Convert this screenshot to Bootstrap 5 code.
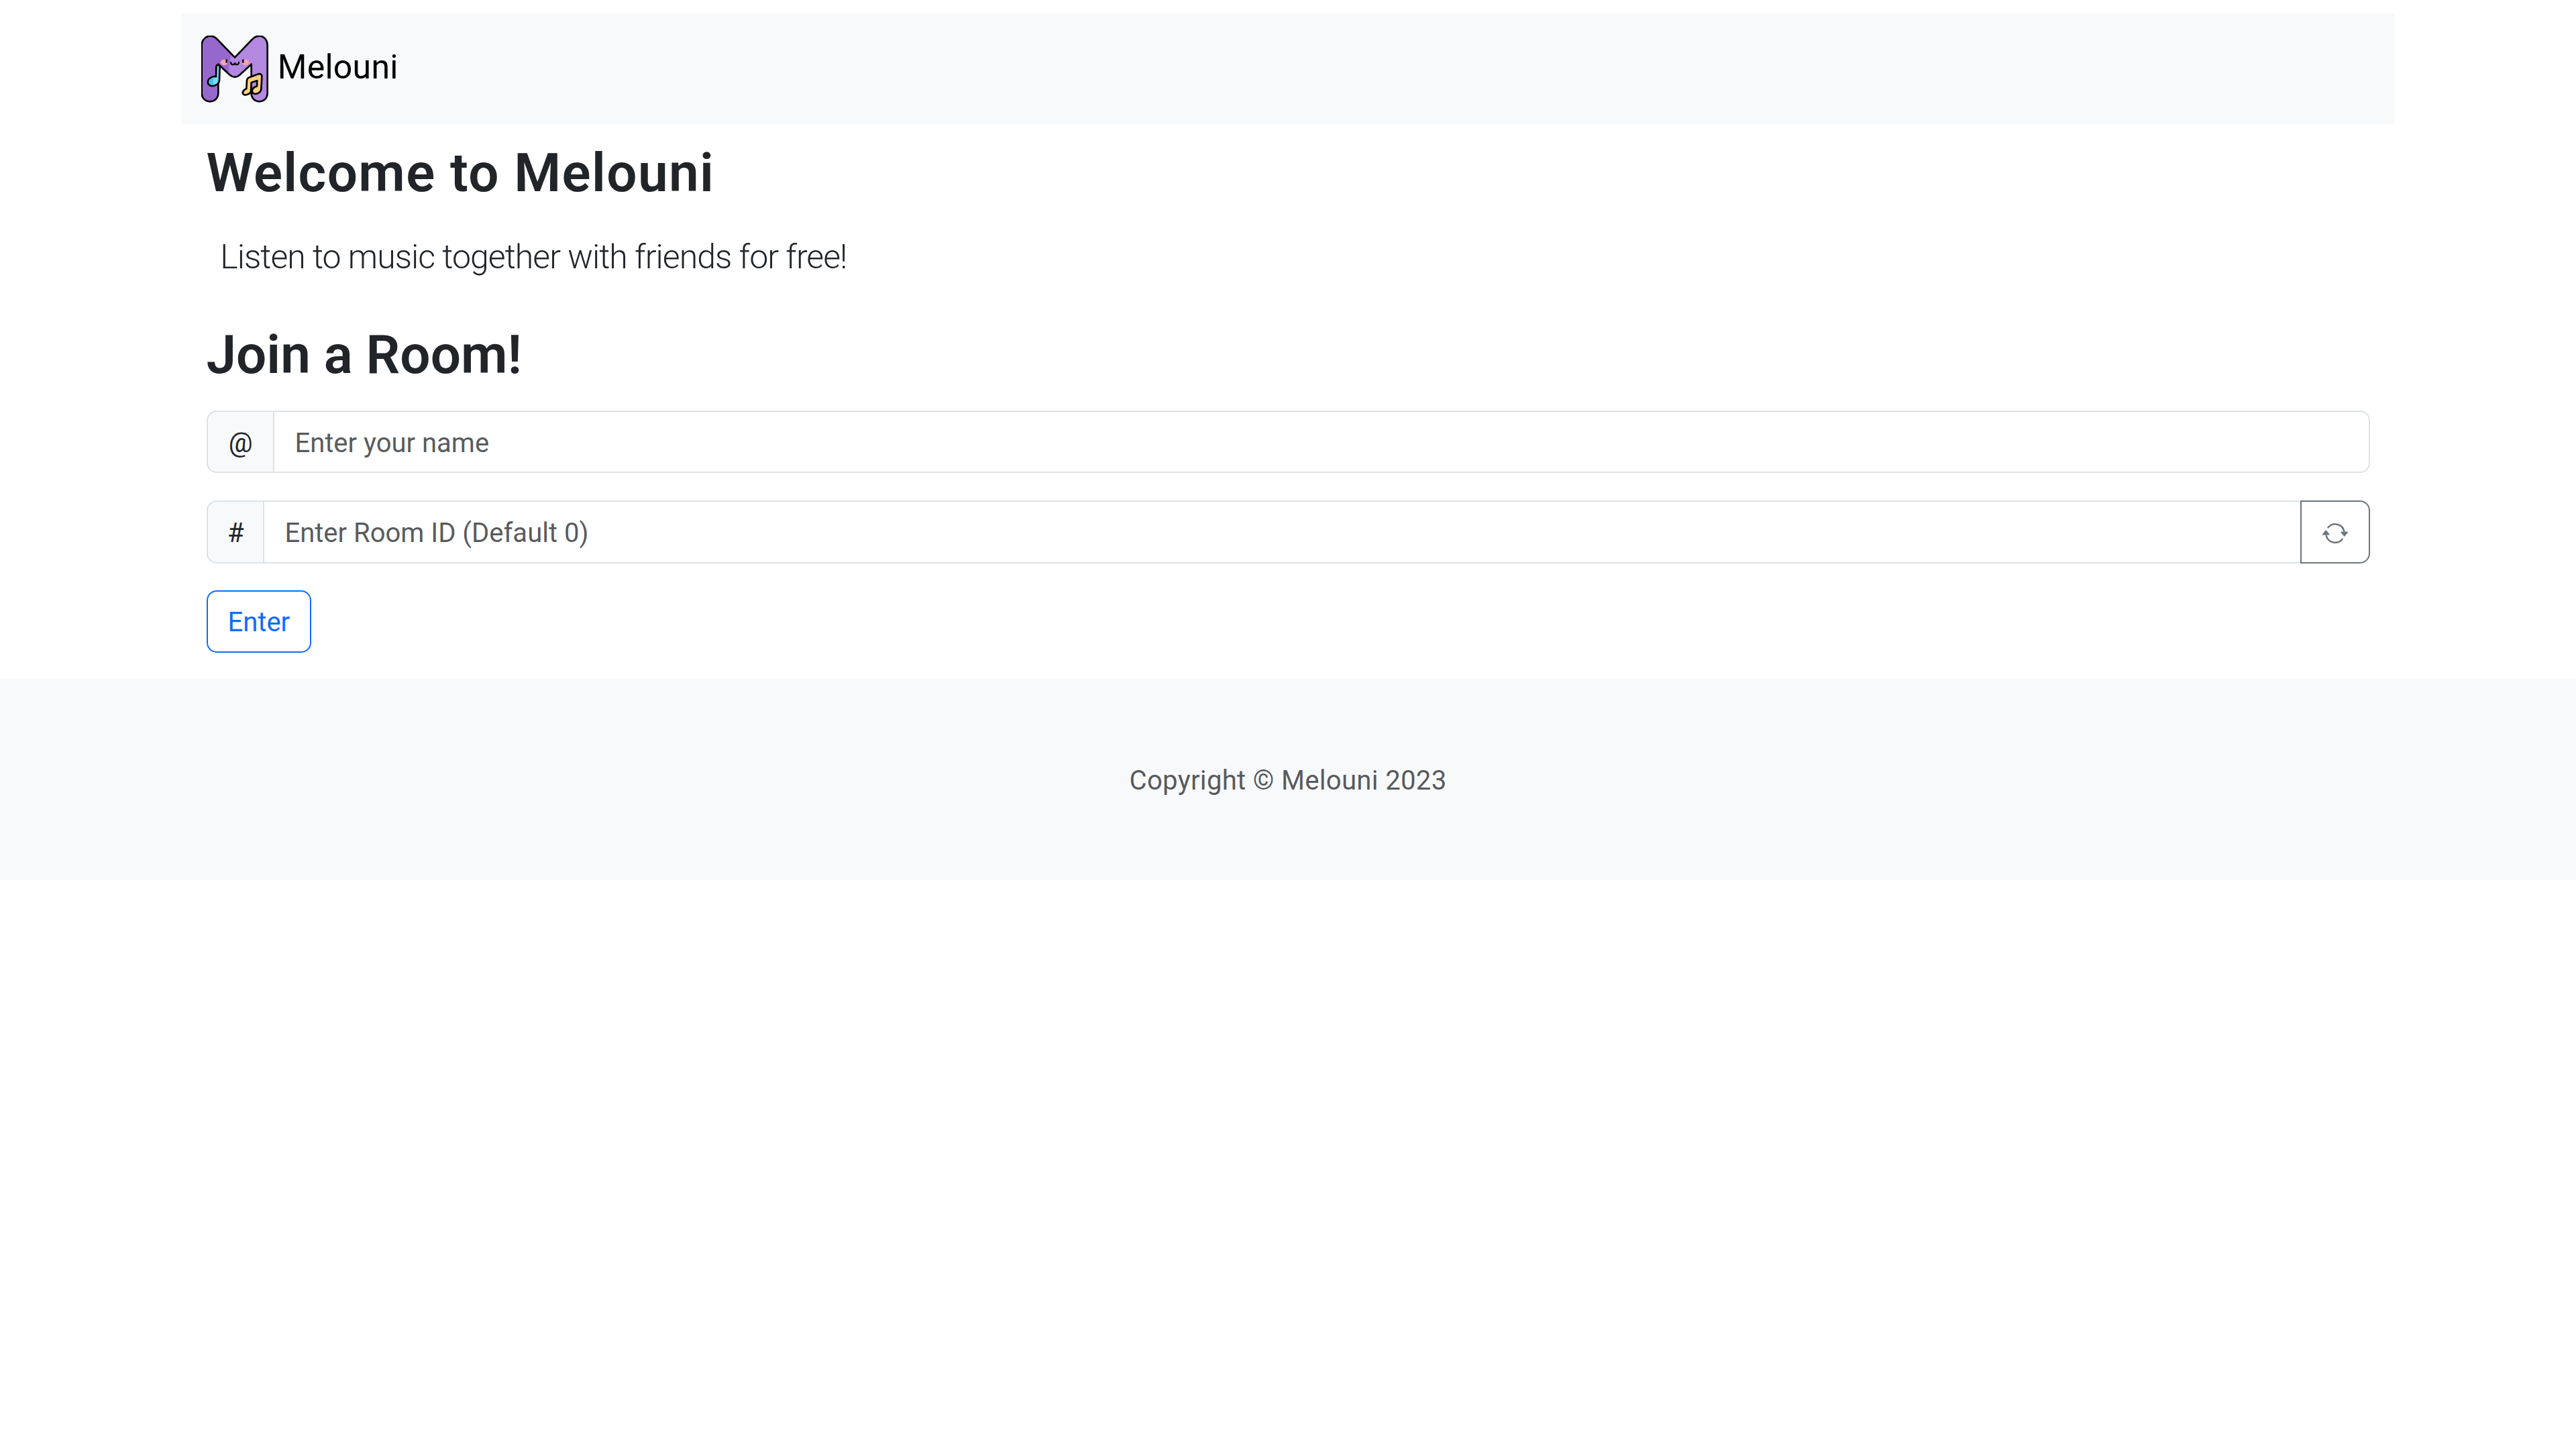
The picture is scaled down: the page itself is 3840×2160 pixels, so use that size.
<!DOCTYPE html>
<html lang="en">

<head>
    <meta charset="UTF-8">
    <meta name="viewport" content="width=device-width, initial-scale=1.0">
    <title>Melouni</title>
    <link href="https://cdn.jsdelivr.net/npm/bootstrap@5.3.0/dist/css/bootstrap.min.css" rel="stylesheet">
    <style>
        html {
            zoom: 2.5;
        }

        body {
            font-family: Roboto, "Noto Sans", sans-serif;
            --bs-body-font-family: Roboto, "Noto Sans", sans-serif;
        }

        .app-nav {
            padding-left: 12px;
            padding-right: 12px;
        }

        .app-brand {
            gap: 5.5px;
        }

        .app-brand-text {
            margin-bottom: 2px;
            letter-spacing: .1px;
        }

        .app-logo {
            width: 40px;
            height: 40px;
        }

        .app-main {
            padding-left: 15px;
            padding-right: 15px;
        }

        .app-title {
            font-weight: 600;
            margin-top: 10px;
            letter-spacing: .56px;
        }

        .app-subtitle {
            padding-left: 8.3px;
            letter-spacing: -.39px;
        }

        .app-join {
            font-weight: 600;
            margin-bottom: 14px;
        }

        .app-form .form-control,
        .app-form .input-group-text,
        .app-form .btn {
            padding-top: 6.6px;
            padding-bottom: 5.1px;
        }

        .app-name-group {
            margin-bottom: 16.4px;
        }

        .app-enter {
            margin-bottom: 15.6px;
        }

        .app-at {
            padding-left: 12.5px;
            padding-right: 12.5px;
        }

        .app-hash {
            padding-left: 11.75px;
            padding-right: 11.75px;
        }

        .app-footer {
            letter-spacing: .14px;
            padding-top: 48.8px;
            padding-bottom: 47.2px;
        }
    </style>
</head>

<body>
    <nav class="navbar bg-light container mt-2 app-nav">
        <a class="navbar-brand d-flex align-items-center app-brand ms-0" href="#">
            <svg class="app-logo" viewBox="60 40 300 300" xmlns="http://www.w3.org/2000/svg">
                <!-- M body -->
                <path fill="#b388e0" d="M62 300V85C62 60 80 42 100 42C112 42 122 47 130 55L210 138L290 55C298 47 308 42 320 42C340 42 356 60 356 85V298C356 320 340 335 320 335C300 335 284 320 284 298V168L232 216C218 228 202 228 188 216L136 168V298C136 320 120 335 99 335C78 335 62 320 62 298Z" />
                <path fill="#9768cc" d="M62 300V85C62 60 80 42 100 42C112 42 122 47 130 55L196 124C186 150 182 180 184 212L136 168V298C136 320 120 335 99 335C78 335 62 320 62 298Z" />
                <ellipse cx="162" cy="160" rx="16" ry="13" fill="#f9a1b0" />
                <ellipse cx="258" cy="160" rx="16" ry="13" fill="#f9a1b0" />
                <path fill="none" stroke="#000" stroke-width="8" stroke-linecap="round" stroke-linejoin="round" d="M62 300V85C62 60 80 42 100 42C112 42 122 47 130 55L210 138L290 55C298 47 308 42 320 42C340 42 356 60 356 85V298C356 320 340 335 320 335C300 335 284 320 284 298V168L232 216C218 228 202 228 188 216L136 168V298C136 320 120 335 99 335C78 335 62 320 62 298Z" />
                <path fill="none" stroke="#000" stroke-width="7" stroke-linecap="round" d="M173 149V159M247 149V159M192 160C193 173 208 173 210 161C212 173 227 173 228 160" />
                <!-- blue note -->
                <path fill="#70dcff" stroke="#000" stroke-width="8" stroke-linejoin="round" d="M127 180C129 168 143 168 143 181L141 240C139 262 112 270 98 262C84 254 88 235 105 227C114 222 122 222 126 224Z" />
                <path fill="#45c0ee" d="M96 246C97 237 106 230 116 227C110 240 112 252 118 260C106 264 94 258 96 246Z" />
                <!-- yellow note -->
                <path fill="#fdd27e" stroke="#000" stroke-width="8" stroke-linejoin="round" d="M272 228L316 212C324 209 332 215 331 224L328 278C327 296 304 306 292 298C282 290 288 274 304 268C306 267 308 267 309 267L310 242L284 250L282 290C280 302 256 310 248 302C241 294 250 282 262 278L264 240C265 234 268 230 272 228Z" />
            </svg>
            <span class="app-brand-text">Melouni</span>
        </a>
    </nav>

    <main class="container app-main">
        <h2 class="app-title mb-3">Welcome to Melouni</h2>
        <p class="lead app-subtitle mb-4">Listen to music together with friends for free!</p>
        <h2 class="app-join">Join a Room!</h2>

        <form id="joinForm" class="app-form">
            <div class="input-group app-name-group">
                <span class="input-group-text app-at">@</span>
                <input type="text" class="form-control" placeholder="Enter your name">
            </div>
            <div class="input-group mb-3">
                <span class="input-group-text app-hash">#</span>
                <input type="text" class="form-control" placeholder="Enter Room ID (Default 0)">
                <button class="btn btn-outline-secondary d-flex align-items-center" type="button" aria-label="Random room">
                    <svg width="16" height="16" viewBox="0 0 16 16" fill="currentColor" xmlns="http://www.w3.org/2000/svg">
                        <path d="M11.534 7h3.932a.25.25 0 0 1 .192.41l-1.966 2.36a.25.25 0 0 1-.384 0l-1.966-2.36a.25.25 0 0 1 .192-.41zm-11 2h3.932a.25.25 0 0 0 .192-.41L2.692 6.23a.25.25 0 0 0-.384 0L.342 8.59A.25.25 0 0 0 .534 9z" />
                        <path fill-rule="evenodd" d="M8 3c-1.552 0-2.94.707-3.857 1.818a.5.5 0 1 1-.771-.636A6.002 6.002 0 0 1 13.917 7H12.9A5.002 5.002 0 0 0 8 3zM3.1 9a5.002 5.002 0 0 0 8.757 2.182.5.5 0 1 1 .771.636A6.002 6.002 0 0 1 2.083 9H3.1z" />
                    </svg>
                </button>
            </div>
            <button type="button" class="btn btn-outline-primary app-enter">Enter</button>
        </form>
    </main>

    <footer class="bg-light text-center text-muted app-footer">
        Copyright © Melouni 2023
    </footer>

    <script src="https://cdn.jsdelivr.net/npm/bootstrap@5.3.0/dist/js/bootstrap.bundle.min.js"></script>
</body>

</html>
